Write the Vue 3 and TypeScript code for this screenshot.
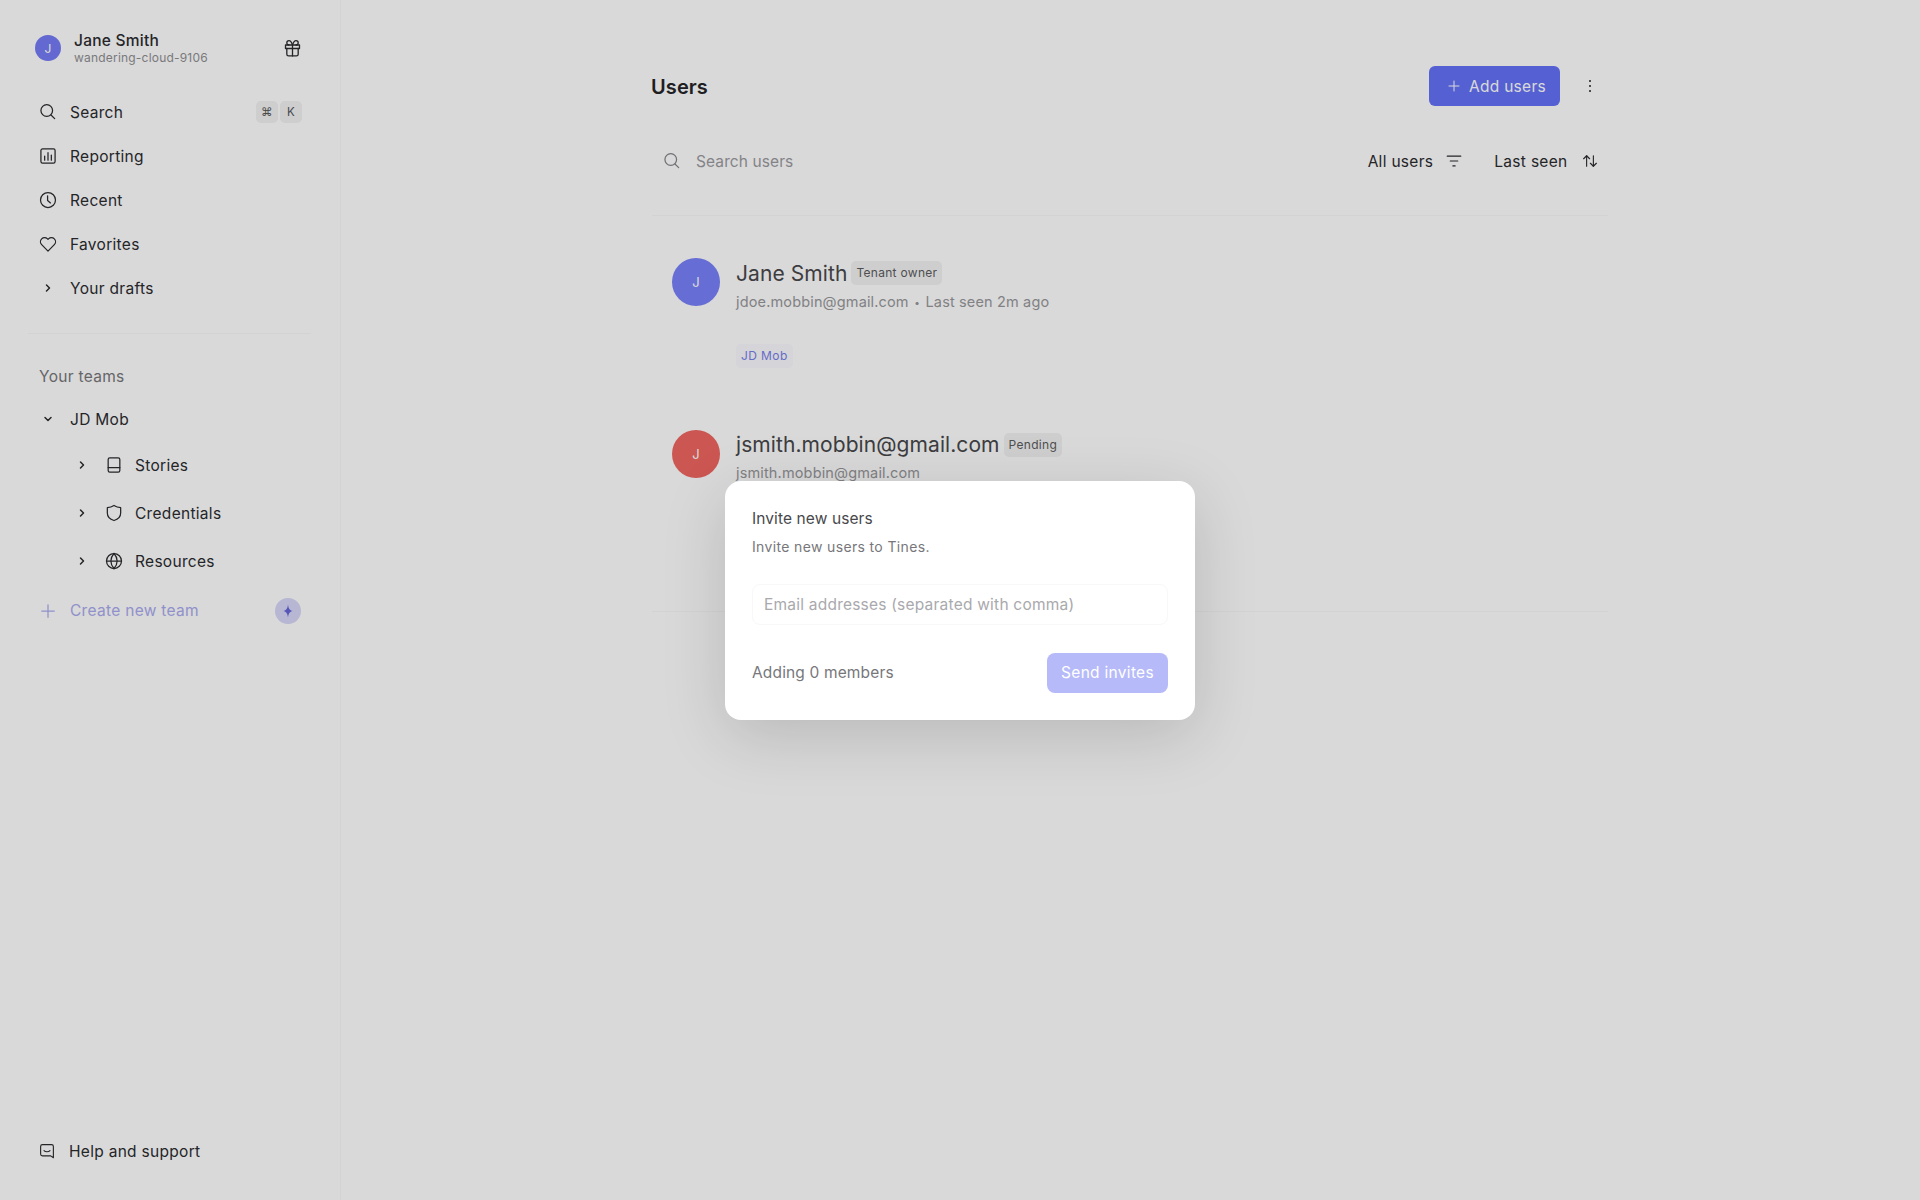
<script setup lang="ts">
const ic: Record<string, string[]> = {
  search: ['M10.5 3.2a7 7 0 1 0 0 14 7 7 0 0 0 0-14Z', 'M15.6 15.6 20 20'],
  chart: ['M5.5 3.5h13a2 2 0 0 1 2 2v13a2 2 0 0 1-2 2h-13a2 2 0 0 1-2-2v-13a2 2 0 0 1 2-2Z', 'M8 12v5', 'M12 8v9', 'M16 11v6'],
  clock: ['M12 3a9 9 0 1 0 0 18 9 9 0 0 0 0-18Z', 'M11.5 7v5.5l3.5 3'],
  heart: ['M12 20.5 4.4 12.8a5 5 0 0 1 0-7 4.9 4.9 0 0 1 7 0l.6.6.6-.6a4.9 4.9 0 0 1 7 0 5 5 0 0 1 0 7L12 20.5Z'],
  right: ['m10 8 4 4-4 4'],
  down: ['m8 10 4 4 4-4'],
  book: ['M7 3.5h10a2 2 0 0 1 2 2v13a2 2 0 0 1-2 2H7a2 2 0 0 1-2-2v-13a2 2 0 0 1 2-2Z', 'M5 15h14'],
  shield: ['M12 3c2.5 1.6 5 2.4 8 2.6v6.4c0 4.4-3.2 7.6-8 9-4.8-1.4-8-4.6-8-9V5.600c3-.2 5.500-1 8-2.600Z'],
  globe: ['M12 3a9 9 0 1 0 0 18 9 9 0 0 0 0-18Z', 'M3 12h18', 'M12 3c-5 5.400-5 12.600 0 18', 'M12 3c5 5.400 5 12.600 0 18'],
  plus: ['M12 4.500v15', 'M4.500 12h15'],
  gift: ['M4 8h16v4H4Z', 'M5.500 12v6.500a2 2 0 0 0 2 2h9a2 2 0 0 0 2-2V12', 'M12 8v12.500', 'M12 8S10.500 3 8 3a2.500 2.500 0 0 0 0 5', 'M12 8s1.500-5 4-5a2.500 2.500 0 0 1 0 5'],
  help: ['M6 3.500h12a2.500 2.500 0 0 1 2.500 2.500v15l-3.500-2.500H6A2.500 2.500 0 0 1 3.500 16V6A2.500 2.500 0 0 1 6 3.500Z', 'M8 11.500c1.800 2 6.200 2 8 0'],
  filter: ['M3 5.500h18', 'M7 12h10', 'M10.500 18.500h3'],
  sort: ['M7.500 19V5', 'M3.500 9l4-4 4 4', 'M16.500 5v14', 'M12.500 15l4 4 4-4'],
}
const topNav = [
  { icon: 'chart', label: 'Reporting' },
  { icon: 'clock', label: 'Recent' },
  { icon: 'heart', label: 'Favorites' },
  { icon: 'right', label: 'Your drafts' },
]
const children = [
  { icon: 'book', label: 'Stories' },
  { icon: 'shield', label: 'Credentials' },
  { icon: 'globe', label: 'Resources' },
]
const users = [
  { name: 'Jane Smith', badge: 'Tenant owner', email: 'jdoe.mobbin@gmail.com', seen: 'Last seen 2m ago', color: 'blue', team: 'JD Mob' },
  { name: 'jsmith.mobbin@gmail.com', badge: 'Pending', email: 'jsmith.mobbin@gmail.com', seen: '', color: 'red', team: '' },
]
</script>

<template>
  <div class="app">
    <aside class="sidebar">
      <div class="account">
        <span class="mini-avatar">J</span>
        <div class="account-text">
          <div class="account-name">Jane Smith</div>
          <div class="account-sub">wandering-cloud-9106</div>
        </div>
        <svg class="gift" viewBox="0 0 24 24"><path v-for="d in ic.gift" :key="d" :d="d" /></svg>
      </div>

      <nav class="nav">
        <div class="row">
          <svg class="icon" viewBox="0 0 24 24"><path v-for="d in ic.search" :key="d" :d="d" /></svg>
          <span>Search</span>
          <span class="keys"><kbd>⌘</kbd><kbd>K</kbd></span>
        </div>
        <div v-for="item in topNav" :key="item.label" class="row">
          <svg class="icon" :class="{ small: item.icon === 'right' }" viewBox="0 0 24 24"><path v-for="d in ic[item.icon]" :key="d" :d="d" /></svg>
          <span>{{ item.label }}</span>
        </div>
      </nav>

      <div class="side-rule"></div>
      <div class="teams-title">Your teams</div>
      <div class="row">
        <svg class="icon small" viewBox="0 0 24 24"><path v-for="d in ic.down" :key="d" :d="d" /></svg>
        <span>JD Mob</span>
      </div>
      <div class="children">
        <div v-for="c in children" :key="c.label" class="child">
          <svg class="icon small" viewBox="0 0 24 24"><path v-for="d in ic.right" :key="d" :d="d" /></svg>
          <svg class="icon" viewBox="0 0 24 24"><path v-for="d in ic[c.icon]" :key="d" :d="d" /></svg>
          <span>{{ c.label }}</span>
        </div>
      </div>
      <div class="row create">
        <svg class="icon" viewBox="0 0 24 24"><path v-for="d in ic.plus" :key="d" :d="d" /></svg>
        <span>Create new team</span>
        <span class="spark">
          <svg viewBox="0 0 24 24"><path d="M12 1c.9 7 3 10 8 11-5 1-7.100 4-8 11-.9-7-3-10-8-11 5-1 7.100-4 8-11Z" /></svg>
        </span>
      </div>

      <div class="row help">
        <svg class="icon" viewBox="0 0 24 24"><path v-for="d in ic.help" :key="d" :d="d" /></svg>
        <span>Help and support</span>
      </div>
    </aside>

    <main class="main">
      <div class="content">
        <header class="head">
          <h1>Users</h1>
          <button class="add" type="button">
            <svg viewBox="0 0 24 24"><path v-for="d in ic.plus" :key="d" :d="d" /></svg>
            Add users
          </button>
          <span class="kebab"><i></i><i></i><i></i></span>
        </header>

        <div class="tools">
          <svg class="icon tool-search" viewBox="0 0 24 24"><path v-for="d in ic.search" :key="d" :d="d" /></svg>
          <span class="placeholder">Search users</span>
          <span class="tool all">All users <svg class="icon" viewBox="0 0 24 24"><path v-for="d in ic.filter" :key="d" :d="d" /></svg></span>
          <span class="tool seen">Last seen <svg class="icon" viewBox="0 0 24 24"><path v-for="d in ic.sort" :key="d" :d="d" /></svg></span>
        </div>

        <div class="user-list">
          <article v-for="u in users" :key="u.name" class="user">
            <span class="avatar" :class="u.color">J</span>
            <div>
              <div class="name-line">
                <span class="name">{{ u.name }}</span>
                <span class="badge">{{ u.badge }}</span>
              </div>
              <div class="meta">
                {{ u.email }}<template v-if="u.seen"><span class="dot">•</span>{{ u.seen }}</template>
              </div>
              <span v-if="u.team" class="tag">{{ u.team }}</span>
            </div>
          </article>
        </div>
        <div class="end-rule"></div>
      </div>
    </main>

    <div class="overlay">
      <section class="modal">
        <h2>Invite new users</h2>
        <p>Invite new users to Tines.</p>
        <input class="email" type="text" placeholder="Email addresses (separated with comma)" />
        <div class="modal-foot">
          <span>Adding 0 members</span>
          <button class="send" type="button">Send invites</button>
        </div>
      </section>
    </div>
  </div>
</template>

<style>
html, body { margin: 0; background: #fff; }
</style>

<style scoped>
.app {
  position: relative;
  display: flex;
  height: 1200px;
  overflow: hidden;
  font-family: Inter, "Noto Sans", sans-serif;
  font-size: 15.500px;
  color: #2c2c30;
  background: #fff;
}
svg { display: block; flex: none; fill: none; stroke: currentColor; stroke-width: 1.500; stroke-linecap: round; stroke-linejoin: round; }
.icon { width: 20px; height: 20px; }
.icon.small { width: 18px; height: 18px; stroke-width: 2; }

.sidebar {
  width: 341px;
  box-sizing: border-box;
  flex: none;
  display: flex;
  flex-direction: column;
  padding: 32px 29px 27px 28px;
  border-right: 1px solid #f8f8f8;
}
.account { display: flex; align-items: center; height: 32px; padding-left: 7px; margin-bottom: 26px; }
.mini-avatar {
  width: 26px; height: 26px; border-radius: 50%;
  background: #757cf5; color: #fff; font-size: 12px;
  display: flex; align-items: center; justify-content: center;
}
.account-text { margin-left: 13px; flex: 1; padding-top: 2px; }
.account-name { font-size: 15.500px; font-weight: 500; line-height: 18px; letter-spacing: .25px; }
.account-sub { font-size: 12px; line-height: 16px; color: #8f8f93; letter-spacing: .2px; }
.gift { width: 21px; height: 21px; margin-right: 8px; }

.row { display: flex; align-items: center; height: 44px; padding-left: 10px; letter-spacing: .3px; }
.row .icon { margin-right: 12px; }
.row .icon.small { margin: 0 13px 0 1px; }
.keys { margin-left: auto; margin-right: 9px; display: flex; gap: 2px; }
kbd {
  width: 22px; height: 22px; border-radius: 5px; background: #f2f2f2;
  display: flex; align-items: center; justify-content: center;
  font: 400 11.500px Inter, "Noto Sans", "DejaVu Sans", sans-serif; color: #55555a;
}
.side-rule { height: 1px; background: #f8f8f8; margin-top: 23px; }
.teams-title { margin: 33px 0 0 11px; height: 20px; line-height: 20px; color: #77777b; letter-spacing: .3px; }
.teams-title + .row { margin-top: 10px; }
.child { display: flex; align-items: center; height: 48px; padding-left: 44.500px; letter-spacing: .3px; }
.child .icon.small { margin-right: 13px; }
.child .icon { margin-right: 11.500px; }
.create { height: 51px; color: #aaabef; }
.spark {
  margin-left: auto; margin-right: 10px;
  width: 26px; height: 26px; border-radius: 50%;
  background: #d7d7f8; color: #6466d9;
  display: flex; align-items: center; justify-content: center;
}
.spark svg { width: 14px; height: 14px; fill: currentColor; stroke: none; }
.help { margin-top: auto; padding-left: 9px; }
.help .icon { width: 18px; height: 18px; margin: 0 13px 0 1px; }

.main { flex: 1; min-width: 0; display: flex; justify-content: center; padding-right: 1px; }
.content { width: 956px; padding-top: 66px; }
.head { display: flex; align-items: center; height: 40px; }
h1 { margin: 0 auto 0 -1px; padding-top: 1px; font-size: 20px; font-weight: 600; letter-spacing: .1px; color: #252528; }
.add {
  width: 131px; height: 40px; box-sizing: border-box; border: 0; border-radius: 6px;
  background: #6472f7; color: #fff; font: 400 15.500px Inter, sans-serif; letter-spacing: .3px;
  display: flex; align-items: center; justify-content: center; gap: 7px; padding: 0 0 0 3px;
}
.add svg { width: 16px; height: 16px; }
.kebab { width: 4px; display: flex; flex-direction: column; gap: 3px; margin: 0 16px 0 28px; }
.kebab i { width: 2px; height: 2px; border-radius: 50%; background: #252528; margin-left: 1px; }

.tools { display: flex; align-items: center; height: 40px; margin-top: 35px; padding-left: 10px; letter-spacing: .1px; }
.tool-search { color: #85858a; margin-right: 14px; }
.placeholder { color: #9b9b9f; margin-right: auto; }
.tool { display: flex; align-items: center; letter-spacing: .3px; }
.all { gap: 12px; margin-right: 31px; }
.seen { gap: 13px; margin-right: 9.500px; }
.tool .icon { width: 18px; height: 18px; }

.user-list { margin-top: 34px; border-top: 1px solid #f8f8f8; padding: 42px 0 0 20px; }
.user { display: flex; gap: 16px; margin-bottom: 61.500px; min-height: 109px; }
.user:last-child { margin-bottom: 0; }
.avatar {
  width: 48px; height: 48px; border-radius: 50%; color: #fff; font-size: 13px;
  display: flex; align-items: center; justify-content: center; flex: none;
}
.avatar.blue { background: #7880fa; }
.avatar.red { background: #f06560; }
.name-line { display: flex; align-items: center; height: 30px; gap: 4px; }
.name { font-size: 21px; color: #48484c; letter-spacing: .08px; }
.badge {
  height: 24px; padding: 0 5px; border-radius: 5px; background: #f3f3f3;
  font-size: 12px; line-height: 24px; letter-spacing: .3px; color: #5c5c60;
}
.meta { margin-top: 3.500px; line-height: 20px; font-size: 14.500px; color: #98989c; letter-spacing: .15px; }
.dot { margin: 0 5.500px; font-size: 10px; position: relative; top: -1px; }
.tag {
  display: inline-block; margin-top: 31.500px; height: 24px; padding: 0 5px; border-radius: 5px;
  background: #f9f9ff; color: #7880ea; font-size: 12px; line-height: 24px; letter-spacing: .4px;
}
.end-rule { height: 1px; background: #f8f8f8; margin-top: 72px; }

.overlay {
  position: absolute; inset: 0; background: rgba(0, 0, 0, .15);
  display: flex; align-items: center; justify-content: center;
}
.modal {
  width: 470px; height: 239px; box-sizing: border-box; padding: 26px 27px 0; background: #fff; border-radius: 16px;
  box-shadow: 0 16px 64px rgba(0, 0, 0, .15);
}
h2 { margin: 0; font-size: 15.500px; font-weight: 400; line-height: 24px; color: #48484c; letter-spacing: .1px; }
p { margin: 6px 0 0; font-size: 14px; line-height: 20px; color: #77777b; letter-spacing: .35px; }
.email {
  display: block; width: 100%; height: 41px; box-sizing: border-box; margin-top: 27px; padding: 0 11px;
  border: 1px solid #f8f8f8; border-radius: 8px; outline: 0;
  font: 15.500px Inter, sans-serif; letter-spacing: .22px;
}
.email::placeholder { color: #a9a9ad; opacity: 1; }
.modal-foot { display: flex; align-items: center; justify-content: space-between; margin-top: 28px; color: #77777b; letter-spacing: .15px; }
.send {
  width: 121px; height: 40px; border: 0; border-radius: 8px; padding: 0;
  background: #b6baf9; color: #fff; font: 400 15.500px Inter, sans-serif; letter-spacing: .3px;
}
</style>
